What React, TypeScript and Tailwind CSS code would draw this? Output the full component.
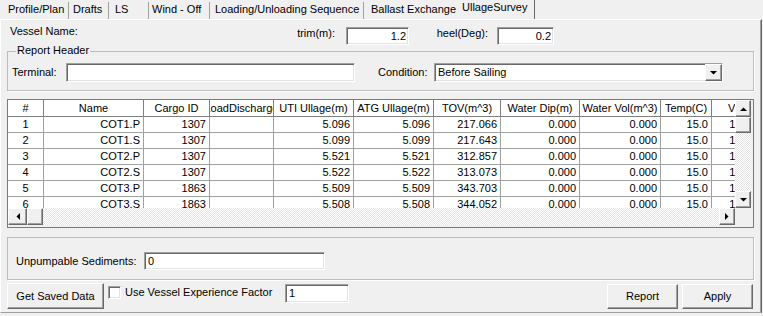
import React from 'react';

const font = "font-['Liberation_Sans',Arial,sans-serif]";

const tabs = [
  { label: 'Profile/Plan', cls: 'w-[69px] pl-[8px] border-r border-r-[#a0a0a0]' },
  { label: 'Drafts', cls: 'w-[40px] pl-[4px] border-r border-r-[#a0a0a0]' },
  { label: 'LS', cls: 'w-[40px] pl-[6px] border-r border-r-[#a0a0a0]' },
  { label: 'Wind - Off', cls: 'w-[61px] pl-[3px] border-r border-r-[#a0a0a0]' },
  { label: 'Loading/Unloading Sequence', cls: 'w-[154px] pl-[5px] border-r border-r-[#a0a0a0]' },
  { label: 'Ballast Exchange', cls: 'w-[89px] pl-[7px]' },
];

const cols = [
  { h: '#', w: 'w-[36px]', center: true },
  { h: 'Name', w: 'w-[100px]' },
  { h: 'Cargo ID', w: 'w-[66px]' },
  { h: 'LoadDischarge', w: 'w-[64px]' },
  { h: 'UTI Ullage(m)', w: 'w-[80px]' },
  { h: 'ATG Ullage(m)', w: 'w-[80px]' },
  { h: 'TOV(m^3)', w: 'w-[67px]' },
  { h: 'Water Dip(m)', w: 'w-[79px]' },
  { h: 'Water Vol(m^3)', w: 'w-[81px]' },
  { h: 'Temp(C)', w: 'w-[51px]' },
  { h: 'VCF', w: 'w-[55px]' },
];

const rows = [
  ['1', 'COT1.P', '1307', '', '5.096', '5.096', '217.066', '0.000', '0.000', '15.0', '1.0000'],
  ['2', 'COT1.S', '1307', '', '5.099', '5.099', '217.643', '0.000', '0.000', '15.0', '1.0000'],
  ['3', 'COT2.P', '1307', '', '5.521', '5.521', '312.857', '0.000', '0.000', '15.0', '1.0000'],
  ['4', 'COT2.S', '1307', '', '5.522', '5.522', '313.073', '0.000', '0.000', '15.0', '1.0000'],
  ['5', 'COT3.P', '1863', '', '5.509', '5.509', '343.703', '0.000', '0.000', '15.0', '1.0000'],
  ['6', 'COT3.S', '1863', '', '5.508', '5.508', '344.052', '0.000', '0.000', '15.0', '1.0000'],
];

const sunken =
  'bg-white border border-t-[#a0a0a0] border-l-[#a0a0a0] border-b-white border-r-white shadow-[inset_1px_1px_0_#696969,inset_-1px_-1px_0_#e3e3e3]';
const raised =
  'bg-[#f0f0f0] border border-t-white border-l-white border-b-[#696969] border-r-[#696969] shadow-[inset_-1px_-1px_0_#a0a0a0]';
const track =
  'bg-[image:repeating-conic-gradient(#ffffff_0_25%,#e4e4e4_0_50%)] bg-[length:2px_2px]';

function TextBox({ value = '', className = '', right = false }: { value?: string; className?: string; right?: boolean }) {
  return (
    <div className={`${sunken} flex items-center px-[3px] ${right ? 'justify-end pr-[2px]' : ''} ${className}`}>
      {value}
    </div>
  );
}

function Arrow({ dir }: { dir: 'up' | 'down' | 'left' | 'right' }) {
  const pts = {
    up: '0,4 3.5,0.5 7,4',
    down: '0,0 7,0 3.5,3.5',
    left: '4,0 4,7 0.5,3.5',
    right: '0,0 0,7 3.5,3.5',
  }[dir];
  const vertical = dir === 'up' || dir === 'down';
  return (
    <svg width={vertical ? 7 : 4} height={vertical ? 4 : 7} viewBox={vertical ? '0 0 7 4' : '0 0 4 7'}>
      <polygon points={pts} fill="#000" />
    </svg>
  );
}

function ScrollBtn({ dir, className = '' }: { dir: 'up' | 'down' | 'left' | 'right'; className?: string }) {
  return (
    <div className={`${raised} flex items-center justify-center shrink-0 ${className}`}>
      <Arrow dir={dir} />
    </div>
  );
}

function Button({ label, className = '' }: { label: string; className?: string }) {
  return <div className={`${raised} flex items-center justify-center shrink-0 ${className}`}>{label}</div>;
}

export default function App() {
  return (
    <div className={`w-[763px] h-[316px] overflow-hidden bg-[#f0f0f0] text-[11px] leading-[13px] text-black ${font}`}>
      {/* tab strip */}
      <div className="flex items-end h-[19px]">
        {tabs.map(t => (
          <div key={t.label} className={`h-[17px] pt-[1px] whitespace-nowrap ${t.cls}`}>{t.label}</div>
        ))}
        <div className="h-[19px] w-[82px] pl-[9px] pt-[1px] border-r border-r-[#696969] whitespace-nowrap">UllageSurvey</div>
      </div>

      {/* tab page */}
      <div className="w-[762px] h-[294px] border-t border-t-white border-l border-l-white border-r border-r-[#696969] border-b border-b-[#a0a0a0] shadow-[inset_-1px_0_0_#a0a0a0] flex flex-col">
        {/* vessel / trim / heel */}
        <div className="flex mt-[7px] h-[18px]">
          <div className="w-[289px] pl-[9px] -mt-[2px]">Vessel Name:</div>
          <div className="w-[45px] text-right">trim(m):</div>
          <TextBox value="1.2" right className="ml-[11px] w-[63px] h-[18px]" />
          <div className="w-[79px] text-right">heel(Deg):</div>
          <TextBox value="0.2" right className="ml-[9px] w-[57px] h-[18px]" />
        </div>

        {/* Report Header group */}
        <div className="relative ml-[6px] mt-[6px] w-[747px] h-[40px] border border-[#bcbcbc] shadow-[1px_1px_0_#fff]">
          <span className="absolute left-[8px] -top-[8px] px-[1px] bg-[#f0f0f0]">Report Header</span>
          <div className="flex items-center mt-[11px] h-[19px]">
            <div className="w-[58px] pl-[4px]">Terminal:</div>
            <TextBox className="w-[289px] h-[19px]" />
            <div className="ml-[23px] w-[56px]">Condition:</div>
            <div className={`${sunken} w-[289px] h-[19px] flex items-center`}>
              <div className="flex-1 pl-[3px]">Before Sailing</div>
              <ScrollBtn dir="down" className="w-[17px] h-[17px]" />
            </div>
          </div>
        </div>

        {/* grid */}
        <div className="ml-[6px] mt-[8px] w-[747px] h-[129px] border border-[#7a7a7a] bg-[#f0f0f0] flex">
          <div className="w-[727px] flex flex-col">
            <div className="h-[108px] overflow-hidden bg-white">
              <div className="flex h-[17px]">
                {cols.map(c => (
                  <div key={c.h} className={`${c.w} shrink-0 flex items-center justify-center overflow-hidden whitespace-nowrap border-r border-b border-[#808080]`}>
                    {c.h}
                  </div>
                ))}
              </div>
              {rows.map(r => (
                <div key={r[0]} className="flex h-[16px]">
                  {r.map((v, i) => (
                    <div key={i} className={`${cols[i].w} shrink-0 flex items-center whitespace-nowrap overflow-hidden border-r border-b border-[#a0a0a0] ${cols[i].center ? 'justify-center' : 'justify-end pr-[3px]'}`}>
                      {v}
                    </div>
                  ))}
                </div>
              ))}
            </div>
            <div className="h-[17px] flex">
              <ScrollBtn dir="left" className="w-[19px] h-[17px]" />
              <div className={`${raised} w-[16px] h-[17px] shrink-0`} />
              <div className={`flex-1 ${track}`} />
              <ScrollBtn dir="right" className="w-[16px] h-[17px]" />
            </div>
          </div>
          <div className="w-[16px] flex flex-col">
            <div className="h-[108px] flex flex-col">
              <ScrollBtn dir="up" className="w-[16px] h-[17px]" />
              <div className={`${raised} w-[16px] h-[16px] shrink-0`} />
              <div className={`flex-1 ${track}`} />
              <ScrollBtn dir="down" className="w-[16px] h-[17px]" />
            </div>
          </div>
        </div>

        {/* Unpumpable sediments group */}
        <div className="ml-[6px] mt-[9px] w-[747px] h-[43px] border border-[#bcbcbc] shadow-[1px_1px_0_#fff]">
          <div className="flex items-center mt-[14px] h-[18px]">
            <div className="w-[136px] pl-[8px]">Unpumpable Sediments:</div>
            <TextBox value="0" className="w-[181px] h-[18px]" />
          </div>
        </div>

        {/* bottom row */}
        <div className="flex items-start ml-[6px] mt-[3px] h-[26px]">
          <Button label="Get Saved Data" className="w-[97px] h-[26px]" />
          <div className={`${sunken} ml-[4px] mt-[3px] w-[13px] h-[13px] shrink-0`} />
          <div className="ml-[4px] mt-[3px] w-[160px] whitespace-nowrap">Use Vessel Experience Factor</div>
          <TextBox value="1" className="mt-[1px] w-[64px] h-[19px]" />
          <Button label="Report" className="ml-[258px] mt-[1px] w-[71px] h-[25px]" />
          <Button label="Apply" className="ml-[4px] mt-[1px] w-[71px] h-[25px]" />
        </div>
      </div>
    </div>
  );
}
